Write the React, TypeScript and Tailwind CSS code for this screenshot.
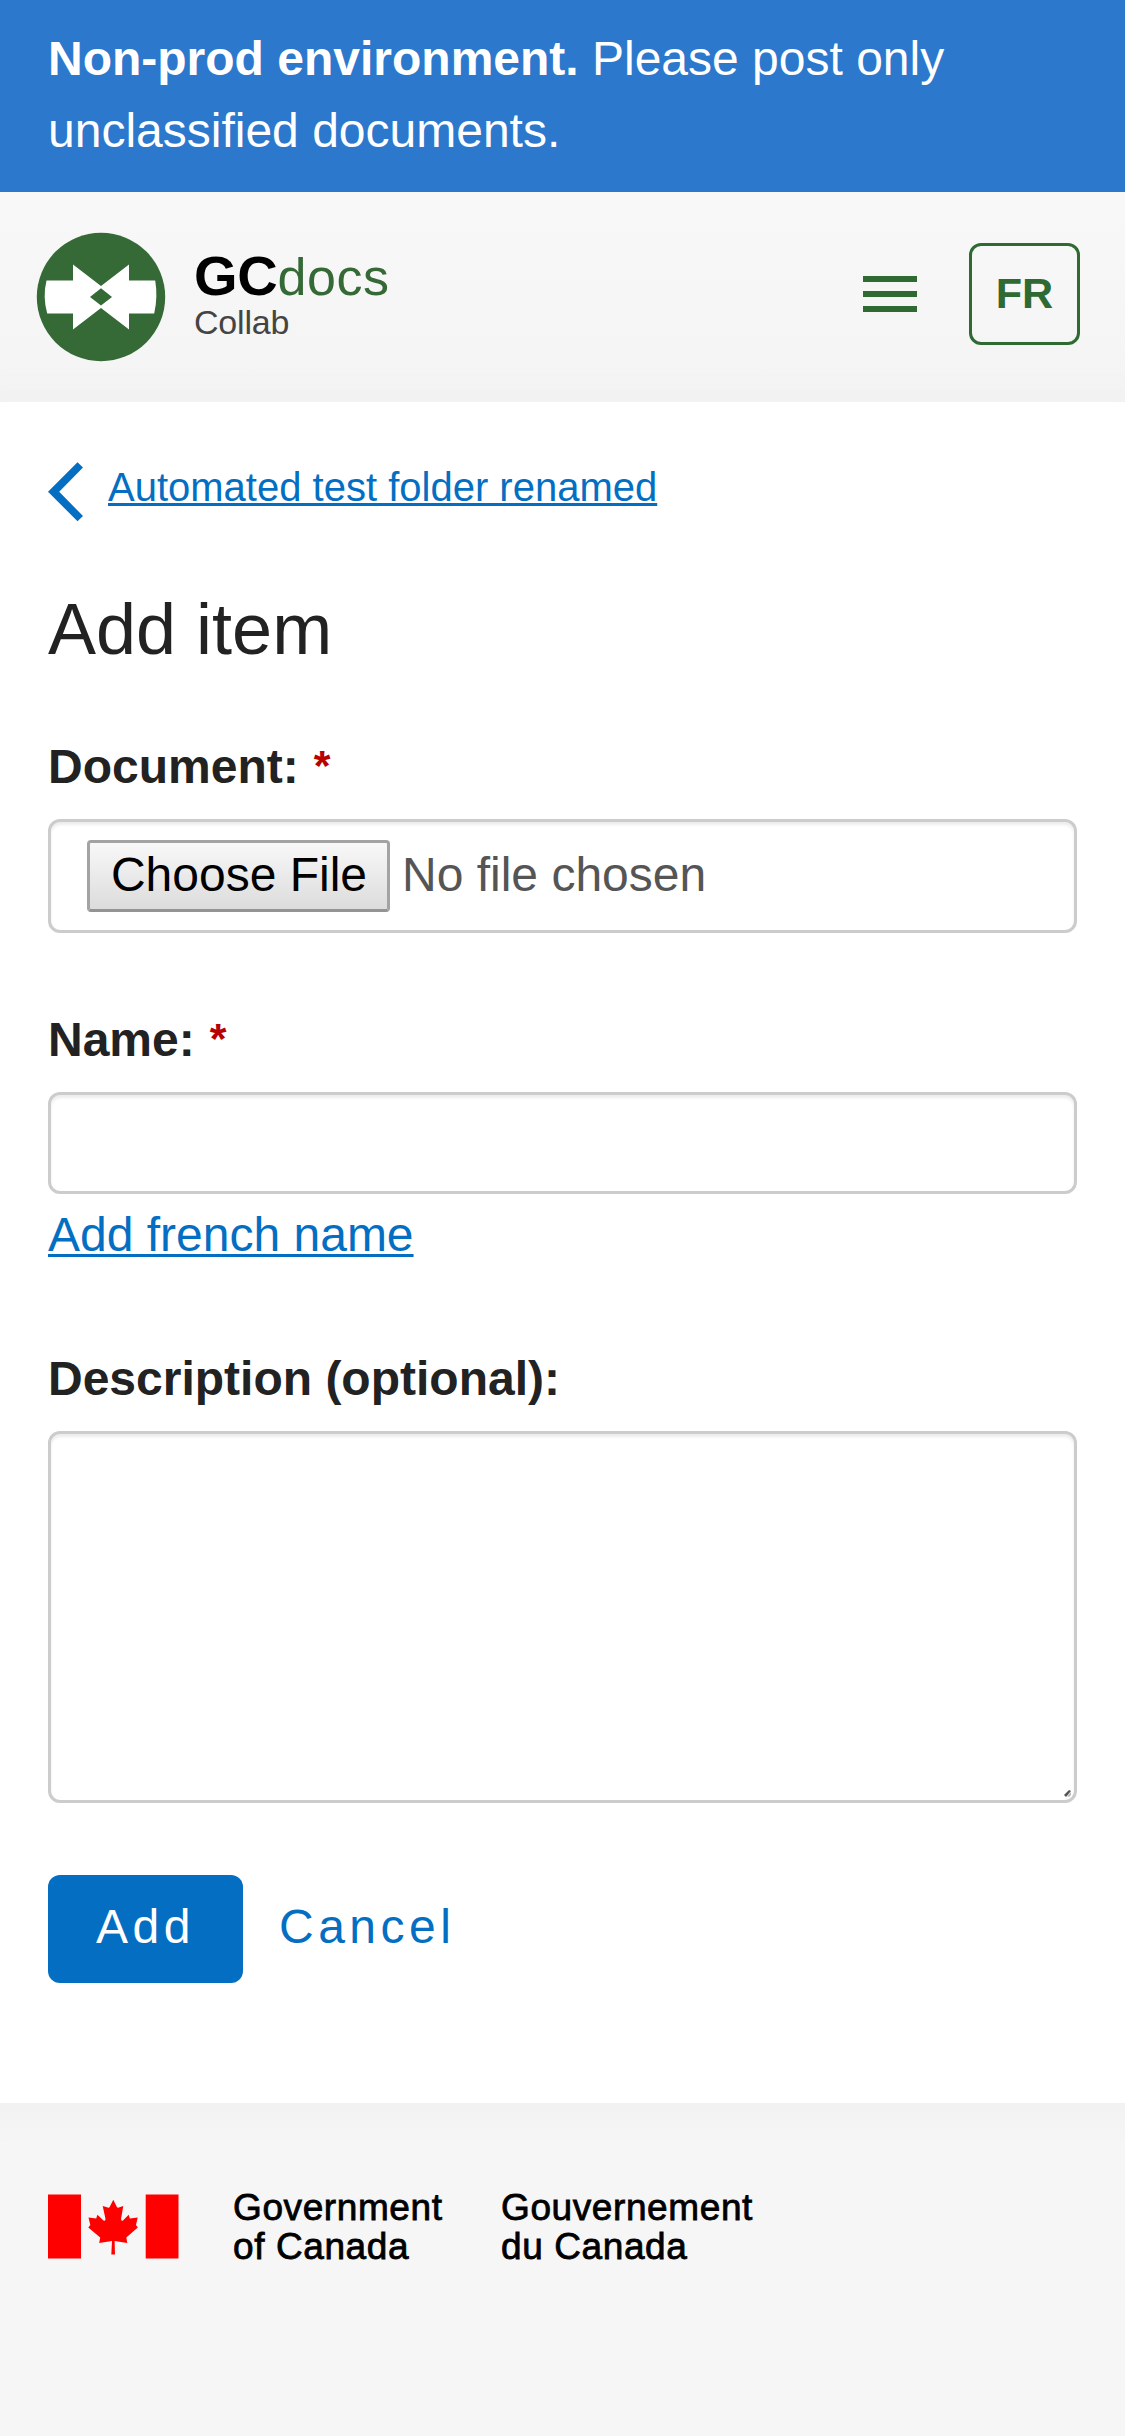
import React from "react";

function Banner() {
  return (
    <div className="h-[192px] bg-[#2b78cd] px-12 pt-[23px] text-[48px] leading-[72px] text-white">
      <div>
        <strong className="font-bold">Non-prod environment.</strong> Please post only
      </div>
      <div>unclassified documents.</div>
    </div>
  );
}

function Logo() {
  return (
    <svg viewBox="0 0 130 130" className="h-[130px] w-[130px] shrink-0">
      <circle cx="65" cy="65" r="64.2" fill="#356936" />
      <path
        d="M10.5 48.5H37V32.6L65 54L93 32.6V48.5H119.2Q122 65 118.2 81.4H93V97.4L65 76L37 97.4V81.4H11.2Q6.500 65 10.500 48.500Z"
        fill="#fff"
      />
      <path d="M65 56.300L76 65L65 73.500L54 65Z" fill="#356936" />
    </svg>
  );
}

function Header() {
  return (
    <header className="flex h-[210px] justify-between bg-[linear-gradient(#f8f8f8,#f4f4f4)] pl-9 pr-[45px] shadow-[inset_0_-60px_60px_-60px_rgba(0,0,0,0.025)]">
      <div className="flex pt-[39.5px]">
        <Logo />
        <div className="pl-7 pt-[12.5px]">
          <div className="text-[56px] leading-[64px]">
            <span className="font-bold tracking-[-0.3px] text-black">GC</span>
            <span className="text-[52px] tracking-[0.6px] text-[#356936]">docs</span>
          </div>
          <div className="mt-[-6px] text-[34px] leading-[38px] tracking-[-0.2px] text-[#444]">Collab</div>
        </div>
      </div>
      <div className="flex pt-[51px]">
        <button aria-label="Menu" className="mr-[52px] mt-[33px] flex h-9 w-[54px] flex-col gap-[9px]">
          <span className="h-1.5 w-full bg-[#306a33]" />
          <span className="h-1.5 w-full bg-[#306a33]" />
          <span className="h-1.5 w-full bg-[#306a33]" />
        </button>
        <button className="flex h-[102px] w-[111px] items-center justify-center rounded-xl border-3 border-[#306a33] text-[43.2px] font-bold leading-none text-[#306a33]">
          FR
        </button>
      </div>
    </header>
  );
}

function Label({ text, required }: { text: string; required?: boolean }) {
  return (
    <div className="h-[72px] text-[48px] font-bold leading-[74px] text-[#222]">
      {text}
      {required && (
        <span className="relative top-[-3px] ml-[3px] text-[43px] leading-none text-[#b80000]">{" "}*</span>
      )}
    </div>
  );
}

const field =
  "block w-full rounded-xl border-3 border-[#ccc] bg-white shadow-[inset_0_3px_3px_rgba(0,0,0,0.075)]";

function Main() {
  return (
    <main className="h-[1701px] bg-white px-12 pt-[60px]">
      <div className="flex h-[60px]">
        <svg viewBox="0 0 36 60" className="h-[60px] w-9 shrink-0">
          <path d="M0 29.700L29.500 0.300L35 5.500L11.200 29.700L35 54.100L29.500 59.300Z" fill="#046fc2" />
        </svg>
        <a className="ml-6 text-[40px] leading-[50px] text-[#046fc2] underline decoration-[3px] underline-offset-[2px]">
          Automated test folder renamed
        </a>
      </div>
      <h1 className="mt-[67px] h-[80px] text-[72px] leading-[80px] text-[#222]">Add item</h1>

      <div className="mt-[61px]">
        <Label text="Document:" required />
      </div>
      <div className={`${field} mt-[17px] flex h-[114px] pl-9 pt-[18px] text-[48px] leading-[64px]`}>
        <span className="h-[72px] w-[303px] rounded-[4px] border-3 border-x-[#a3a3a3] border-b-[#939393] border-t-[#a3a3a3] bg-[linear-gradient(#f8f8f8,#dcdcdc)] pl-px text-center text-black">
          Choose File
        </span>
        <span className="ml-3 mt-[3px] text-[#555]">No file chosen</span>
      </div>

      <div className="mt-[70px]">
        <Label text="Name:" required />
      </div>
      <div className={`${field} mt-[17px] h-[102px]`} />
      <a className="block h-[60px] text-[48px] leading-[82px] text-[#046fc2] underline decoration-[3px] underline-offset-[3px]">
        Add french name
      </a>

      <div className="mt-[88px]">
        <Label text="Description (optional):" />
      </div>
      <div className={`${field} mt-[17px] flex h-[372px] items-end justify-end p-0.5`}>
        <svg viewBox="0 0 9 9" className="h-[9px] w-[9px]">
          <path d="M1 6L6 1L8 2L3 8Z" fill="#555" />
          <path d="M4 7L8 3V6L6 8Z" fill="#bbb" />
        </svg>
      </div>

      <div className="mt-[72px] flex text-[48px] leading-[104px] tracking-[4.5px]">
        <button className="h-[108px] w-[195px] rounded-xl bg-[#046fc2] pb-[4px] text-white">Add</button>
        <button className="ml-9 h-[108px] pb-[4px] text-[#046fc2]">Cancel</button>
      </div>
    </main>
  );
}

function Flag() {
  return (
    <svg viewBox="0 0 131 65" className="h-[65px] w-[131px] shrink-0">
      <path d="M0 0.400H33V64.600H0ZM97.700 0.400H130.500V64.600H97.700Z" fill="red" />
      <path
        d="M65.300 5.700L69 13.200Q69.800 14 70.800 13.500L75.300 12L73 25Q73 27.500 75 26.500L80.700 20.700L81.800 24.500L89.700 23.500L88 31L89.800 33.500L78.300 43.500L79.300 49L66.600 47L67 60.400H63.300L64 47L51.200 49L52.200 43.500L40.300 33.500L42.300 31L40.500 23.500L48.200 24.500L49.400 20.700L55.500 26.500Q57.500 27.500 57.500 25L54.700 12L59.800 13.500Q61 14 61.500 13.200Z"
        fill="red"
      />
    </svg>
  );
}

function Footer() {
  return (
    <footer className="flex h-[333px] bg-[#f6f6f6] px-12 pt-[90.5px] shadow-[inset_0_60px_60px_-60px_rgba(0,0,0,0.04)]">
      <Flag />
      <div className="ml-[54px] mt-[-4.5px] flex text-[37px] leading-[38.500px] tracking-[0.6px] text-black [-webkit-text-stroke:0.8px_black]">
        <div className="w-[268px]">
          <div>Government</div>
          <div>of Canada</div>
        </div>
        <div>
          <div>Gouvernement</div>
          <div>du Canada</div>
        </div>
      </div>
    </footer>
  );
}

export default function App() {
  return (
    <div className="min-h-[2436px] w-[1125px] bg-white font-['Liberation_Sans',Arial,sans-serif]">
      <Banner />
      <Header />
      <Main />
      <Footer />
    </div>
  );
}
